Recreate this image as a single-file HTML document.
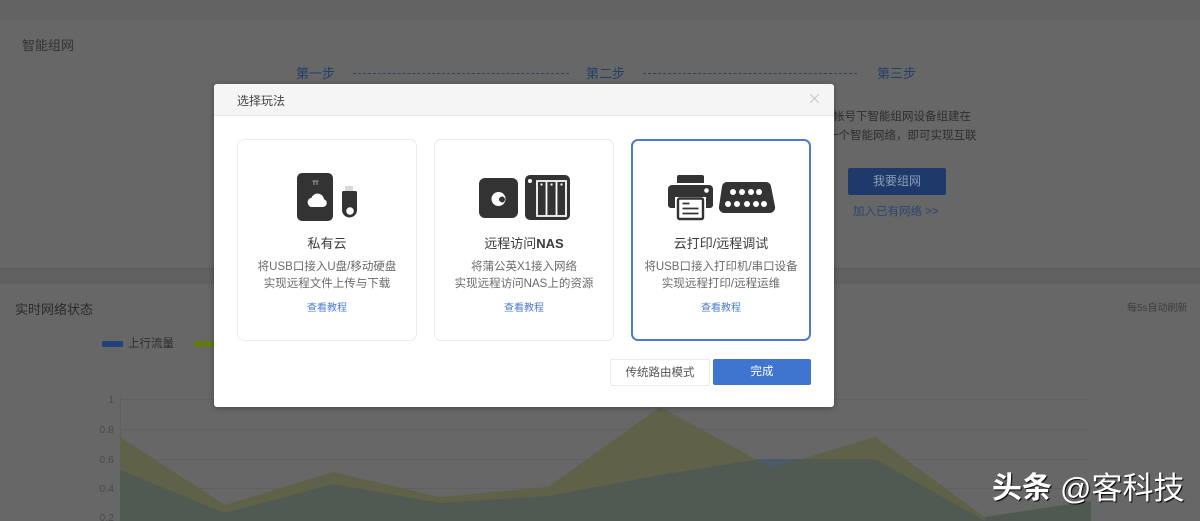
<!DOCTYPE html>
<html lang="zh">
<head>
<meta charset="utf-8">
<style>
html,body{margin:0;padding:0}
body{width:1200px;height:521px;overflow:hidden;position:relative;background:#676767;font-family:"Liberation Sans","Noto Sans CJK SC",sans-serif}
.t{position:absolute;white-space:nowrap;line-height:1}
.c{text-align:center}
.band{position:absolute;left:0;width:1200px}
#modal{position:absolute;left:214px;top:84px;width:620px;height:323px;background:#fff;border-radius:3px;box-shadow:0 1px 6px rgba(0,0,0,.35);overflow:hidden}
#mh{position:absolute;left:0;top:0;width:620px;height:31px;background:#f5f5f5;border-bottom:1px solid #e8e8e8}
.card{position:absolute;top:55px;width:180px;height:202px;box-sizing:border-box;border:1px solid #ebebeb;border-radius:7px;background:#fff}
.card.on{border:2px solid #4f7ac7}
.in{position:absolute;left:-1px;top:-1px;width:180px;height:202px}
.card.on .in{left:-2px;top:-2px}
.name{position:absolute;left:0;width:100%;top:97px;text-align:center;font-size:13px;line-height:15px;color:#3a3a3a}
.card svg{position:absolute}
.desc{position:absolute;left:0;width:100%;top:120px;text-align:center;font-size:11.500px;line-height:17px;color:#6a6a6a;white-space:nowrap}
.lnk{position:absolute;left:0;width:100%;top:163px;text-align:center;font-size:10px;line-height:13px;color:#4a7bd0}
.btn{position:absolute;top:275px;height:25px;line-height:27px;text-align:center;font-size:11.500px;border-radius:2px}
</style>
</head>
<body>
<div class="band" style="top:0;height:20px;background:#636363"></div>
<div class="band" style="top:268px;height:15px;background:#606060;border-top:1px solid #5b5b5b"></div>

<div class="t" style="left:22px;top:39px;font-size:13px;color:#333">智能组网</div>
<div class="t" style="left:296px;top:67px;font-size:13px;color:#234069">第一步</div>
<div class="t" style="left:586px;top:67px;font-size:13px;color:#234069">第二步</div>
<div class="t" style="left:877px;top:67px;font-size:13px;color:#234069">第三步</div>
<div style="position:absolute;left:353px;top:73px;width:216px;border-top:1px dashed #2e4263"></div>
<div style="position:absolute;left:643px;top:73px;width:214px;border-top:1px dashed #2e4263"></div>

<div class="t" style="left:833px;top:112px;font-size:11.500px;color:#2e2e2e">帐号下智能组网设备组建在</div>
<div class="t" style="left:827px;top:131px;font-size:11.500px;color:#2e2e2e">一个智能网络，即可实现互联</div>
<div class="t c" style="left:848px;top:168px;width:98px;height:27px;line-height:27px;background:#1e3a6b;border-radius:2px;font-size:12px;color:#8d9cb5">我要组网</div>
<div class="t" style="left:853px;top:207px;font-size:11.500px;color:#2c4570">加入已有网络 &gt;&gt;</div>

<div class="t" style="left:15px;top:303px;font-size:13px;color:#2b2b2b">实时网络状态</div>
<div class="t" style="left:1127px;top:304px;font-size:10px;color:#3e3e3e">每5s自动刷新</div>
<div style="position:absolute;left:102px;top:341px;width:21px;height:6px;background:#24427a;border-radius:1px"></div>
<div class="t" style="left:128px;top:339px;font-size:11.500px;color:#2e2e2e">上行流量</div>
<div style="position:absolute;left:194px;top:341px;width:21px;height:6px;background:#5f7a12;border-radius:1px"></div>

<svg style="position:absolute;left:0;top:380px" width="1200" height="141" viewBox="0 380 1200 141">
<g stroke="#606060" stroke-width="1" fill="none">
<path d="M120 399.500H1090M120 429.500H1090M120 459.500H1090M120 488.500H1090M120 517.500H1090"/>
<path d="M120.500 395V521"/>
</g>
<path d="M120 437L225 505L333 472L440 497L548 487L660 407L772 468L875 437L985 517L1091 501V521H120Z" fill="#5f6249"/>
<path d="M120 470L225 513L333 484L440 503L548 496L660 475L760 459L875 459L985 521H120Z" fill="#505a52"/>
<path d="M757 459.500H795L772 468Z" fill="#4d5a68"/>
<path d="M985 517L1091 501V521H985Z" fill="#50594f"/>
<g font-family="Liberation Sans,sans-serif" font-size="10.500" fill="#4a4a4a" text-anchor="end">
<text x="114" y="403">1</text>
<text x="114" y="433">0.8</text>
<text x="114" y="463">0.6</text>
<text x="114" y="492">0.4</text>
<text x="114" y="521">0.2</text>
</g>
</svg>

<div id="modal">
  <div id="mh"></div>
  <div class="t" style="left:23px;top:11px;font-size:12px;color:#444">选择玩法</div>
  <svg style="position:absolute;left:596px;top:10px" width="9" height="9" viewBox="0 0 9 9"><path d="M0 0L9 9M9 0L0 9" stroke="#c4c4c4" stroke-width="1" fill="none"/></svg>

  <div class="card" style="left:23px"><div class="in">
    <svg style="left:60px;top:34px" width="62" height="48" viewBox="0 0 62 48">
      <rect x="0" y="0" width="36" height="48" rx="5" fill="#333"/>
      <path d="M17 8v4M20 8v4M15.500 8h3M18.500 8h3" stroke="#bbb" stroke-width=".8" fill="none"/>
      <path d="M14 34h12a4 4 0 0 0 1-7.800a6.500 6.500 0 0 0-12.500-1.500a4.800 4.800 0 0 0-.5 9.300z" fill="#fff"/>
      <rect x="48" y="13" width="8" height="5" fill="#d9d9d9"/>
      <path d="M45 19.500a1.500 1.500 0 0 1 1.500-1.500h12a1.500 1.500 0 0 1 1.500 1.500V37a7.500 7.500 0 0 1-15 0z" fill="#333"/>
      <circle cx="53" cy="38" r="3.800" fill="#fff"/>
    </svg>
    <div class="name">私有云</div>
    <div class="desc">将USB口接入U盘/移动硬盘<br>实现远程文件上传与下载</div>
    <div class="lnk">查看教程</div>
  </div></div>

  <div class="card" style="left:220px"><div class="in">
    <svg style="left:45px;top:36px" width="92" height="46" viewBox="0 0 92 46">
      <rect x="0" y="3" width="39" height="40" rx="6" fill="#333"/>
      <circle cx="19.500" cy="24" r="7" fill="#fff"/>
      <path d="M20 25a3 3 0 1 1 3.500 2.500a4 4 0 0 1-3.500-2.500z" fill="#333"/>
      <rect x="46" y="0" width="45" height="45" rx="5" fill="#333"/>
      <circle cx="51" cy="6" r="2" fill="#fff"/>
      <path d="M58 6h29v35h-29z" fill="none" stroke="#fff" stroke-width="1.800"/>
      <path d="M67.500 6v35M77.500 6v35" stroke="#fff" stroke-width="1.800"/>
      <rect x="61.500" y="8.500" width="2" height="2" fill="#fff"/>
      <rect x="71.500" y="8.500" width="2" height="2" fill="#fff"/>
      <rect x="81.500" y="8.500" width="2" height="2" fill="#fff"/>
    </svg>
    <div class="name">远程访问<b>NAS</b></div>
    <div class="desc">将蒲公英X1接入网络<br>实现远程访问NAS上的资源</div>
    <div class="lnk">查看教程</div>
  </div></div>

  <div class="card on" style="left:417px"><div class="in">
    <svg style="left:37px;top:36px" width="108" height="46" viewBox="0 0 108 46">
      <path d="M9 8V2a2 2 0 0 1 2-2h23a2 2 0 0 1 2 2v6z" fill="#333"/>
      <path d="M4 10h37a4 4 0 0 1 4 4v16a3 3 0 0 1-3 3h-4V22H7v11H3a3 3 0 0 1-3-3V14a4 4 0 0 1 4-4z" fill="#333"/>
      <circle cx="38.500" cy="15.500" r="2.300" fill="#fff"/>
      <rect x="10" y="23.500" width="25" height="20.500" rx="1.500" fill="#fff" stroke="#333" stroke-width="2.400"/>
      <path d="M14.500 28.500h7M14.500 33.500h16M14.500 38.500h16" stroke="#333" stroke-width="1.800"/>
      <path d="M59 7h39a5 5 0 0 1 4.900 4l4 20a5.500 5.500 0 0 1-5.400 7H56.500a5.500 5.500 0 0 1-5.400-7l3-20a5 5 0 0 1 4.900-4z" fill="#333"/>
      <g fill="#fff">
        <circle cx="65" cy="17" r="3"/><circle cx="74" cy="17" r="3"/><circle cx="83" cy="17" r="3"/><circle cx="91" cy="17" r="3"/>
        <circle cx="60" cy="29" r="3"/><circle cx="69" cy="29" r="3"/><circle cx="79" cy="29" r="3"/><circle cx="88" cy="29" r="3"/><circle cx="96" cy="29" r="3"/>
      </g>
    </svg>
    <div class="name">云打印/远程调试</div>
    <div class="desc">将USB口接入打印机/串口设备<br>实现远程打印/远程运维</div>
    <div class="lnk">查看教程</div>
  </div></div>

  <div class="btn" style="left:396px;width:98px;border:1px solid #ececec;color:#555">传统路由模式</div>
  <div class="btn" style="left:499px;width:98px;height:26px;line-height:27px;background:#3f74cf;color:#fff">完成</div>
</div>

<div class="t" style="left:992px;top:474px;font-size:30px;line-height:30px;font-weight:700;color:#fff;text-shadow:1px 1px 1px #000">头条</div>
<div class="t" style="left:1060px;top:474px;font-size:31px;line-height:30px;color:#fff;text-shadow:1px 1px 1px #000">@客科技</div>
</body>
</html>
